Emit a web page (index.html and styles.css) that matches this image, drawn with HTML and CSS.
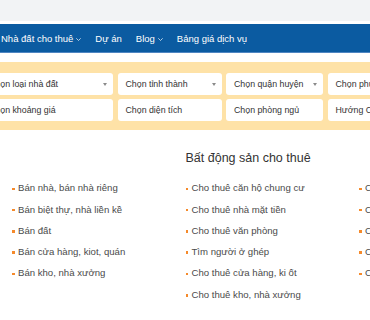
FILE: index.html
```html
<!DOCTYPE html>
<html lang="vi">
<head>
<meta charset="utf-8">
<title>Nhà đất</title>
<link rel="stylesheet" href="styles.css">
</head>
<body>
<div class="topbar"></div>
<nav class="mainnav">
  <ul class="menu">
    <li class="menu-item">Nhà đất cho thuê<svg class="chev" width="5" height="3" viewBox="0 0 5 3"><path d="M0.3 0.3 L2.5 2.5 L4.7 0.3" fill="none" stroke="#dce8f5" stroke-width="0.8"/></svg></li>
    <li class="menu-item">Dự án</li>
    <li class="menu-item">Blog<svg class="chev" width="5" height="3" viewBox="0 0 5 3"><path d="M0.3 0.3 L2.5 2.5 L4.7 0.3" fill="none" stroke="#dce8f5" stroke-width="0.8"/></svg></li>
    <li class="menu-item">Bảng giá dịch vụ</li>
  </ul>
</nav>
<section class="search">
  <div class="search-grid">
    <div class="field">Chọn loại nhà đất<span class="caret"></span></div>
    <div class="field">Chọn tỉnh thành<span class="caret"></span></div>
    <div class="field">Chọn quận huyện<span class="caret"></span></div>
    <div class="field">Chọn phường xã<span class="caret"></span></div>
    <div class="field">Chọn khoảng giá</div>
    <div class="field">Chọn diện tích</div>
    <div class="field">Chọn phòng ngủ</div>
    <div class="field">Hướng Căn hộ</div>
  </div>
</section>
<section class="cats">
  <div class="cat-col">
    <h3 class="cat-title"></h3>
    <ul class="cat-list">
      <li class="cat-item">Bán nhà, bán nhà riêng</li>
      <li class="cat-item">Bán biệt thự, nhà liền kề</li>
      <li class="cat-item">Bán đất</li>
      <li class="cat-item">Bán cửa hàng, kiot, quán</li>
      <li class="cat-item">Bán kho, nhà xưởng</li>
    </ul>
  </div>
  <div class="cat-col">
    <h3 class="cat-title">Bất động sản cho thuê</h3>
    <ul class="cat-list">
      <li class="cat-item">Cho thuê căn hộ chung cư</li>
      <li class="cat-item">Cho thuê nhà mặt tiền</li>
      <li class="cat-item">Cho thuê văn phòng</li>
      <li class="cat-item">Tìm người ở ghép</li>
      <li class="cat-item">Cho thuê cửa hàng, ki ốt</li>
      <li class="cat-item">Cho thuê kho, nhà xưởng</li>
    </ul>
  </div>
  <div class="cat-col">
    <h3 class="cat-title"></h3>
    <ul class="cat-list">
      <li class="cat-item">Căn hộ</li>
      <li class="cat-item">Chung cư</li>
      <li class="cat-item">Cao ốc</li>
      <li class="cat-item">Công trình</li>
      <li class="cat-item">Chỉ dẫn</li>
    </ul>
  </div>
</section>
</body>
</html>
```

FILE: styles.css
```css
html, body {
  margin: 0;
  padding: 0;
  background: #ffffff;
  overflow: hidden;
}
body {
  font-family: "Liberation Sans", Arial, sans-serif;
  width: 370px;
  height: 320px;
}
.topbar {
  height: 21px;
  background: #f2f3f5;
}
.mainnav {
  margin-top: 3px;
  height: 28px;
  background: #0b5ba1;
  border-bottom: 1px solid #4f86c2;
}
.menu {
  list-style: none;
  margin: 0;
  padding: 1px 0 0 1px;
  display: flex;
  gap: 14px;
  height: 27px;
  align-items: center;
}
.menu-item {
  color: #ffffff;
  font-size: 9.5px;
  white-space: nowrap;
  display: flex;
  align-items: center;
}
.chev {
  margin-left: 3px;
  margin-top: 1px;
}
.search {
  margin-top: 9px;
  background: #fee2a7;
  padding: 11px 0 9px;
  overflow: hidden;
}
.search-grid {
  display: grid;
  grid-template-columns: 132px 104px 97px 100px;
  grid-auto-rows: 22px;
  column-gap: 4.5px;
  row-gap: 4px;
  margin-left: -19px;
}
.field {
  background: #ffffff;
  border-radius: 3px;
  font-size: 8.8px;
  color: #333333;
  padding: 0 6px 0 8px;
  display: flex;
  align-items: center;
  justify-content: space-between;
  white-space: nowrap;
  overflow: hidden;
}
.caret {
  width: 0;
  height: 0;
  border-left: 2.5px solid transparent;
  border-right: 2.5px solid transparent;
  border-top: 3px solid #8a8a8a;
  flex: none;
}
.cats {
  display: flex;
  padding: 20px 0 0 12px;
}
.cat-col {
  flex: none;
  width: 173.5px;
}
.cat-title {
  margin: 0 0 11.3px;
  height: 16px;
  font-size: 12.5px;
  line-height: 16px;
  font-weight: normal;
  color: #333333;
  white-space: nowrap;
}
.cat-list {
  list-style: none;
  margin: 0;
  padding: 0;
}
.cat-item {
  font-size: 9.6px;
  line-height: 21.3px;
  color: #4a4a4a;
  white-space: nowrap;
}
.cat-item::before {
  content: "";
  display: inline-block;
  width: 2.5px;
  height: 2.5px;
  background: #f58a2b;
  vertical-align: middle;
  margin-right: 3.5px;
}
```
